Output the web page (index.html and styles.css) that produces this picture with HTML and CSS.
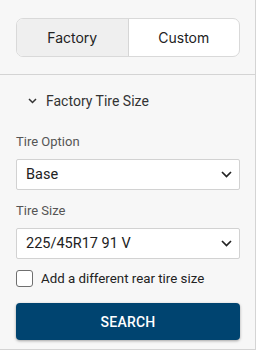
FILE: index.html
```html
<!DOCTYPE html>
<html>
<head>
<meta charset="utf-8">
<link rel="stylesheet" href="styles.css">
</head>
<body>
<div class="panel">
  <div class="top">
    <div class="segment">
      <div class="seg seg-active">Factory</div>
      <div class="seg">Custom</div>
    </div>
  </div>
  <div class="body">
    <div class="section-head">
      <svg class="chev-head" width="9" height="6" viewBox="0 0 9 6"><path d="M1 1 L4.5 4.5 L8 1" fill="none" stroke="#333" stroke-width="1.5"/></svg>
      <span>Factory Tire Size</span>
    </div>
    <div class="label">Tire Option</div>
    <div class="select"><span>Base</span><svg width="11" height="7" viewBox="0 0 11 7"><path d="M1 1 L5.5 5.5 L10 1" fill="none" stroke="#222" stroke-width="1.7"/></svg></div>
    <div class="label label2">Tire Size</div>
    <div class="select"><span>225/45R17 91 V</span><svg width="11" height="7" viewBox="0 0 11 7"><path d="M1 1 L5.5 5.5 L10 1" fill="none" stroke="#222" stroke-width="1.7"/></svg></div>
    <label class="check"><span class="box"></span><span>Add a different rear tire size</span></label>
    <div class="button">SEARCH</div>
  </div>
</div>
</body>
</html>
```

FILE: styles.css
```css
html, body {
  margin: 0;
  padding: 0;
  background: #fff;
}
body {
  font-family: Roboto, "Liberation Sans", sans-serif;
  color: #222;
}
.panel {
  width: 255px;
  height: 349px;
  background: #f7f7f7;
  border-right: 1px solid #d4d4d4;
  border-bottom: 1px solid #d4d4d4;
}
.top {
  padding: 18px 15px 17px 16px;
  border-bottom: 1px solid #d4d4d4;
}
.segment {
  display: flex;
  height: 37px;
  border: 1px solid #d9d9d9;
  border-radius: 7px;
  overflow: hidden;
  background: #fff;
}
.seg {
  flex: 1;
  display: flex;
  align-items: center;
  justify-content: center;
  font-family: Inter, "Noto Sans", sans-serif;
  font-size: 14px;
  color: #222;
}
.seg-active {
  background: #efefef;
  border-right: 1px solid #d6d6d6;
}
.body {
  padding: 17px 15px 0 16px;
}
.section-head {
  display: flex;
  align-items: center;
  height: 18px;
  font-size: 14px;
  color: #333;
}
.chev-head {
  margin-left: 12px;
  margin-right: 9px;
}
.label {
  margin-top: 24px;
  font-size: 13px;
  line-height: 16px;
  color: #555;
}
.label2 {
  margin-top: 13px;
}
.select {
  margin-top: 9px;
  height: 29px;
  background: #fff;
  border: 1px solid #d2d2d2;
  border-radius: 2px;
  display: flex;
  align-items: center;
  justify-content: space-between;
  padding: 0 7px 0 9px;
  font-size: 14.5px;
  color: #222;
}
.check {
  margin-top: 11px;
  display: flex;
  align-items: center;
  height: 17px;
  font-size: 13.3px;
  color: #222;
}
.box {
  box-sizing: border-box;
  width: 17px;
  height: 17px;
  border: 1.6px solid #6f6f6f;
  border-radius: 3px;
  background: #fff;
  margin-right: 8px;
}
.button {
  margin-top: 16px;
  height: 37px;
  background: #004470;
  border-radius: 4px;
  box-shadow: 0 1px 3px rgba(0,0,0,0.35);
  color: #fff;
  font-size: 14px;
  font-weight: 500;
  display: flex;
  align-items: center;
  justify-content: center;
  letter-spacing: 0.2px;
}
```
